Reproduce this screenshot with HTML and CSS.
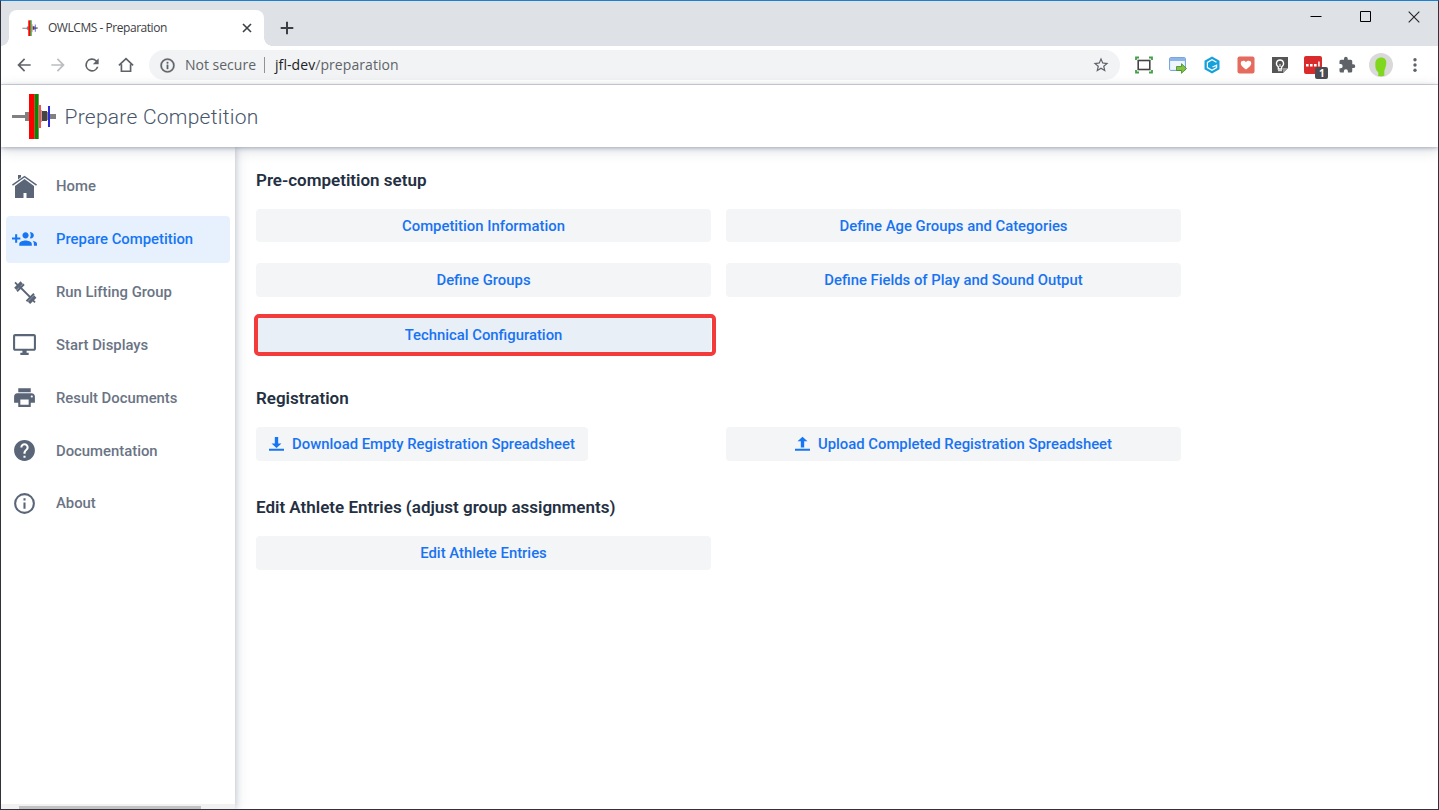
FILE: index.html
```html
<!DOCTYPE html>
<html lang="en">
<head>
<meta charset="utf-8">
<title>OWLCMS - Preparation</title>
<link rel="stylesheet" href="styles.css">
</head>
<body>
<svg width="0" height="0" class="defs" aria-hidden="true">
  <symbol id="logo" viewBox="0 0 46 46">
    <path fill="#808080" d="M1 22h14v3H1zM14 19h5v9h-5zM31 21h14v5H31z"/>
    <path fill="#8b8b6a" d="M23 1h1v45h-1zM27 1h1v45h-1z"/><path fill="#f00" d="M18 1h5.400v45H18z"/>
    <path fill="#008a00" d="M24 1h3v45h-3z"/><path fill="#ef5350" d="M28 12h2v23h-2z"/>
    <path fill="#aaa" d="M30 17h1v12h-1z"/><path fill="#444" d="M31 18h5v10h-5z"/><path fill="#888" d="M36 19h1v8h-1z"/>
    <path fill="#2a2ad8" d="M37 13h2v21h-2z"/>
  </symbol>
</svg>
<div class="window">
  <div class="tabstrip">
    <div class="tab">
      <svg class="favicon" viewBox="0 0 46 46"><use href="#logo"/></svg>
      <span class="tab-title">OWLCMS - Preparation</span>
      <svg class="tab-close" viewBox="0 0 10 10"><path d="M1 1l8 8M9 1l-8 8" stroke="#3c4043" stroke-width="1.6"/></svg>
    </div>
    <svg class="new-tab" viewBox="0 0 14 14"><path d="M7 .7v12.6M.7 7h12.6" stroke="#3c4043" stroke-width="2"/></svg>
    <div class="controls">
      <svg viewBox="0 0 12 12"><path d="M.5 5.5h11" stroke="#000"/></svg>
      <svg viewBox="0 0 12 12"><path d="M1.500 .5h10v10h-10z" fill="none" stroke="#000"/></svg>
      <svg viewBox="0 0 12 12"><path d="M.7 .7l10.6 10.6M11.3 .7L.7 11.3" stroke="#222" stroke-width="1.1"/></svg>
    </div>
  </div>

  <div class="toolbar">
    <div class="nav-buttons">
      <svg viewBox="0 0 24 24" fill="#5f6368"><path d="M20 11H7.83l5.59-5.59L12 4l-8 8 8 8 1.41-1.41L7.83 13H20v-2z"/></svg>
      <svg viewBox="0 0 24 24" fill="#bbbdc0"><path d="M12 4l-1.41 1.41L16.17 11H4v2h12.17l-5.58 5.59L12 20l8-8z"/></svg>
      <svg viewBox="0 0 24 24" fill="#5f6368"><path d="M17.65 6.35A8 8 0 1 0 19.73 14h-2.08A6 6 0 1 1 12 6c1.66 0 3.14.69 4.22 1.78L13 11h7V4z"/></svg>
      <svg viewBox="0 0 24 24" fill="none" stroke="#5f6368" stroke-width="2"><path d="M3.500 12.500L12 4.300l8.500 8.200M6.500 11v8.500h11V11"/></svg>
    </div>
    <div class="omnibox">
      <svg class="info" viewBox="0 0 24 24" fill="#5f6368"><path d="M11 7h2v2h-2zm0 4h2v6h-2zm1-9a10 10 0 1 0 0 20 10 10 0 0 0 0-20zm0 18a8 8 0 1 1 0-16 8 8 0 0 1 0 16z" stroke="#5f6368" stroke-width=".5"/></svg>
      <span class="secure">Not secure</span>
      <span class="divider"></span>
      <span class="url"><span class="host">jfl-dev</span>/preparation</span>
      <svg class="star" viewBox="0 0 24 24" fill="#5f6368"><path d="M22 9.240l-7.190-.62L12 2 9.190 8.630 2 9.240l5.460 4.730L5.820 21 12 17.270 18.180 21l-1.630-7.030L22 9.240zM12 15.400l-3.760 2.270 1-4.280-3.320-2.880 4.380-.38L12 6.100l1.710 4.040 4.380.38-3.320 2.880 1 4.280L12 15.400z"/></svg>
    </div>
    <div class="extensions">
      <svg viewBox="0 0 18 18" fill="none"><path d="M1 4V1.500H4M14 1.500h3V4M17 14v2.500H14M4 16.500H1V14" stroke="#43a047" stroke-width="1.800"/><rect x="3.200" y="4.500" width="11.600" height="9" stroke="#444" stroke-width="1.600"/></svg>
      <svg viewBox="0 0 18 18"><rect x=".6" y="1.600" width="15.800" height="12.800" rx="1" fill="#eef5fd" stroke="#6d9ddb"/><path d="M1 2h15v3H1z" fill="#8db5ec"/><path d="M7.500 10.500h5V7.700l5 4.800-5 4.800v-2.800h-5z" fill="#83c341" stroke="#3d8a26" stroke-width=".8"/></svg>
      <svg viewBox="0 0 18 18"><path d="M9 .5l7.500 4.300v8.400L9 17.500l-7.500-4.300V4.800z" fill="#16a0dc"/><path d="M13.500 6.300L9 3.700 4.400 6.400v5.200L9 14.300l4.600-2.700V9.200L9.500 11" fill="none" stroke="#fff" stroke-width="1.200"/></svg>
      <svg viewBox="0 0 18 18"><rect x=".5" y=".5" width="17" height="17" rx="2" fill="#e46b5d"/><path d="M9 13.500C5 10.600 3.800 9 3.800 7.200 3.800 4.600 7.500 4 9 6.200c1.500-2.200 5.200-1.600 5.200 1C14.200 9 13 10.600 9 13.500z" fill="#fff"/></svg>
      <svg viewBox="0 0 18 18"><path d="M1 1h16v11l-5 5H1z" fill="#555"/><path d="M12 17l5-5h-5z" fill="#999"/><path d="M7.300 10.800C4 8.500 5.400 4 9 4s5 4.500 1.700 6.800V13H7.300z" fill="none" stroke="#fff" stroke-width="1.300"/><path d="M7 14.700h4M9 8v3" stroke="#fff"/></svg>
      <span class="badged">
        <svg viewBox="0 0 18 18"><rect x="0" y="0" width="18" height="18" rx="2" fill="#d92b2b"/><path d="M2 8h2.600v2.600H2zM6 8h2.600v2.600H6zM10 8h2.600v2.600H10zM14.200 5.500h1.500v5h-1.500z" fill="#fff"/></svg>
        <span class="badge">1</span>
      </span>
      <svg viewBox="0 0 24 24" fill="#5f6368"><path d="M20.500 11H19V7a2 2 0 0 0-2-2h-4V3.500a2.500 2.500 0 0 0-5 0V5H4a2 2 0 0 0-2 2v3.800h1.500a2.700 2.700 0 0 1 0 5.400H2V20a2 2 0 0 0 2 2h3.800v-1.500a2.700 2.700 0 0 1 5.400 0V22H17a2 2 0 0 0 2-2v-4h1.500a2.500 2.500 0 0 0 0-5z"/></svg>
      <svg class="avatar" viewBox="0 0 24 24"><circle cx="12" cy="12" r="12" fill="#d9d9d9"/><path d="M12.300 4.500c3.300 0 5 2.200 5 5.200 0 3.500-1.400 6-2 8.300v4.800c-1.500.6-5 .5-6.300 0 .6-1.300.5-2.600 0-3.700-2-1.300-2.900-4.400-2.700-8.600.1-3.800 2.500-6 6-6z" fill="#80d81e"/></svg>
      <svg viewBox="0 0 18 18" fill="#5f6368"><circle cx="9" cy="3.800" r="1.700"/><circle cx="9" cy="9" r="1.700"/><circle cx="9" cy="14.200" r="1.700"/></svg>
    </div>
  </div>

  <header class="app-header">
    <svg class="logo" viewBox="0 0 46 46"><use href="#logo"/></svg>
    <span class="app-title">Prepare Competition</span>
  </header>

  <div class="body">
    <nav class="sidebar">
      <a class="item"><svg viewBox="0 0 25 25"><path d="M6 1h3v2.300l-3 2.300zM12.500 1.700L25 10.400l-.9 1.400-11.600-8.200L.9 11.800 0 10.400z"/><path d="M3 12l9.500-7L22 12v12h-7.500v-5h-3v5H3z"/></svg>Home</a>
      <a class="item active"><svg viewBox="0 0 24 24"><path d="M8 10H5V7H3v3H0v2h3v3h2v-3h3v-2zm10 1c1.660 0 2.990-1.340 2.990-3S19.660 5 18 5c-.32 0-.63.05-.91.14.57.81.9 1.790.9 2.860s-.34 2.040-.9 2.860c.28.090.59.140.91.140zm-5 0c1.660 0 2.990-1.340 2.990-3S14.660 5 13 5s-3 1.340-3 3 1.340 3 3 3zm6.620 2.160c.83.730 1.380 1.660 1.380 2.840v2h3v-2c0-1.540-2.370-2.490-4.380-2.840zM13 13c-2 0-6 1-6 3v2h12v-2c0-2-4-3-6-3z"/></svg>Prepare Competition</a>
      <a class="item"><svg viewBox="0 0 25 25"><g fill="none" stroke="#5a6678"><path d="M7 7l12 12" stroke-width="1.800"/><path d="M5 12.200l7-7M14.500 22.300l7.500-7.500" stroke-width="2"/><path d="M3.300 9.900L9.700 3.500M17 23.800l6.300-6.300" stroke-width="3.200"/><path d="M3 3.300l3 3M20.500 20.800l2.500 2.500" stroke-width="1.800"/></g></svg>Run Lifting Group</a>
      <a class="item"><svg viewBox="0 0 24 24"><path d="M21 2H3c-1.100 0-2 .9-2 2v12c0 1.100.9 2 2 2h7v2H8v2h8v-2h-2v-2h7c1.100 0 2-.9 2-2V4c0-1.100-.9-2-2-2zm0 14H3V4h18v12z"/></svg>Start Displays</a>
      <a class="item"><svg viewBox="0 0 24 24"><path d="M19 8H5c-1.660 0-3 1.340-3 3v6h4v4h12v-4h4v-6c0-1.660-1.340-3-3-3zm-3 11H8v-5h8v5zm3-7c-.55 0-1-.45-1-1s.45-1 1-1 1 .45 1 1-.45 1-1 1zm-1-9H6v4h12V3z"/></svg>Result Documents</a>
      <a class="item"><svg viewBox="0 0 24 24"><path d="M12 2C6.480 2 2 6.480 2 12s4.480 10 10 10 10-4.480 10-10S17.520 2 12 2zm1 17h-2v-2h2v2zm2.070-7.750l-.9.920C13.450 12.900 13 13.500 13 15h-2v-.5c0-1.100.45-2.100 1.170-2.830l1.240-1.260c.37-.36.59-.86.59-1.410 0-1.100-.9-2-2-2s-2 .9-2 2H8c0-2.210 1.790-4 4-4s4 1.790 4 4c0 .88-.36 1.680-.93 2.250z"/></svg>Documentation</a>
      <a class="item"><svg viewBox="0 0 24 24"><path d="M11 17h2v-6h-2v6zm1-15a10 10 0 1 0 0 20 10 10 0 0 0 0-20zm0 18a8 8 0 1 1 0-16 8 8 0 0 1 0 16zM11 9h2V7h-2v2z"/></svg>About</a>
      <div class="scrollbar"><div class="thumb"></div></div>
    </nav>
    <main class="content">
      <h2>Pre-competition setup</h2>
      <div class="grid">
        <a class="btn">Competition Information</a>
        <a class="btn">Define Age Groups and Categories</a>
        <a class="btn">Define Groups</a>
        <a class="btn">Define Fields of Play and Sound Output</a>
        <a class="btn focus">Technical Configuration</a>
      </div>
      <h2>Registration</h2>
      <div class="grid">
        <a class="btn fit"><svg viewBox="0 0 16 16"><path d="M0 13.600h16v2H0zM6.200 1h3.600v7h3.500L8 12.800 2.700 8h3.500z"/></svg>Download Empty Registration Spreadsheet</a>
        <a class="btn"><svg viewBox="0 0 16 16"><path d="M0 13.600h16v2H0zM6.200 12.300h3.600V5.500h3.500L8 .7 2.700 5.500h3.500z"/></svg>Upload Completed Registration Spreadsheet</a>
      </div>
      <h2>Edit Athlete Entries (adjust group assignments)</h2>
      <div class="grid">
        <a class="btn">Edit Athlete Entries</a>
      </div>
    </main>
  </div>
</div>
</body>
</html>
```
FILE: styles.css
```css
* { box-sizing: border-box; }
body { margin: 0; font-family: Roboto, "Liberation Sans", sans-serif; }
svg { display: block; flex: none; }
.defs { position: absolute; }

.window {
  width: 1439px; height: 810px; overflow: hidden;
  display: flex; flex-direction: column;
  border: 1px solid #32323c; border-top-color: #1a80d2;
  background: #fff;
}

/* Browser chrome */
.tabstrip { height: 45px; flex: none; display: flex; background: #dee1e6; padding: 9px 0 0 8px; }
.tab {
  position: relative; width: 255px; height: 36px; padding: 0 13px;
  display: flex; align-items: center;
  background: #fff; border-radius: 8px 8px 0 0;
}
.tab::before, .tab::after { content: ""; position: absolute; bottom: 0; width: 8px; height: 8px; }
.tab::before { left: -8px; background: radial-gradient(circle at 0 0, transparent 7.5px, #fff 8px); }
.tab::after { right: -8px; background: radial-gradient(circle at 100% 0, transparent 7.5px, #fff 8px); }
.favicon { width: 16px; height: 16px; }
.tab-title { margin-left: 10px; padding-bottom: 1px; font: 12px "Open Sans", sans-serif; letter-spacing: -0.46px; color: #3c4043; flex: 1; white-space: nowrap; }
.tab-close { width: 10px; height: 10px; margin-right: -1px; }
.new-tab { width: 14px; height: 14px; margin: 11px 0 0 16px; }
.controls { margin: 1px 18px 0 auto; display: flex; gap: 37px; }
.controls svg { width: 12px; height: 12px; }

.toolbar { height: 39px; flex: none; display: flex; align-items: center; border-bottom: 1px solid #dadce0; padding-left: 13px; }
.nav-buttons { display: flex; gap: 14px; }
.nav-buttons svg { width: 20px; height: 20px; }
.omnibox {
  width: 971px; height: 30px; margin-left: 13px; padding: 0 10px;
  display: flex; align-items: center;
  background: #f1f3f4; border-radius: 15px;
  font: 14px "Open Sans", sans-serif; color: #5f6368;
}
.info { width: 17px; height: 17px; }
.secure { margin-left: 9px; width: 72px; padding-bottom: 1px; white-space: nowrap; }
.divider { width: 1px; height: 16px; background: #8f9296; margin: 0 10px 0 7px; }
.url { flex: 1; padding-bottom: 1px; letter-spacing: .07px; }
.host { color: #202124; }
.star { width: 18px; height: 18px; }
.extensions { display: flex; align-items: center; gap: 15.900px; margin-left: 15px; }
.extensions svg { width: 18px; height: 18px; }
.extensions .avatar { width: 24px; height: 24px; margin: 0 -3px; }
.badged { position: relative; }
.badge {
  position: absolute; left: 11px; top: 11px; width: 13px; height: 12px;
  border-radius: 2px; background: #4a4d52; color: #fff;
  font: bold 10px/12px "Open Sans", sans-serif; text-align: center;
}

/* Application */
.app-header {
  position: relative; z-index: 2; height: 62px; flex: none; padding-left: 10px;
  display: flex; align-items: center; background: #fff;
  box-shadow: 0 1px 4px rgba(40, 56, 90, .35), 0 3px 12px rgba(40, 56, 90, .18);
}
.logo { width: 46px; height: 46px; }
.app-title { margin: 2px 0 0 7.500px; font-size: 21px; font-weight: 300; letter-spacing: .25px; color: #47566a; }

.body { flex: 1; display: flex; min-height: 0; }
.sidebar {
  position: relative; z-index: 1; width: 234px; flex: none; background: #fff;
  display: flex; flex-direction: column; gap: 5.850px; padding: 15.800px 5px 0;
  box-shadow: 0 0 7px rgba(40, 56, 90, .28), 2px 0 14px rgba(40, 56, 90, .1);
}
.item {
  height: 47px; flex: none; display: flex; align-items: center; gap: 19px; padding: 0 6px;
  border-radius: 4px; font-size: 14.850px; font-weight: 500; color: #6a7484;
}
.item svg { width: 25px; height: 25px; fill: #5a6678; }
.item.active { background: #e7f1fe; color: #1676f3; }
.item.active svg { fill: #1676f3; }
.scrollbar { height: 5px; margin: auto -5px 0; padding: 2px 0 0 18px; background: #f1f1f1; }
.thumb { width: 182px; height: 3px; background: #c1c1c1; }

.content { flex: 1; padding: 16.800px 21px; }
h2 { margin: 0 0 13px; font-size: 17px; line-height: 32px; font-weight: 600; color: #243042; }
.grid { display: grid; grid-template-columns: 455px 455px; column-gap: 15px; row-gap: 21px; margin-bottom: 30.400px; }
.btn {
  position: relative; height: 33.600px; display: flex; align-items: center; justify-content: center;
  border-radius: 4px; background: #f3f5f7; color: #1873f2;
  font-size: 14.850px; font-weight: 500; white-space: nowrap;
}
.btn svg { width: 15px; height: 15px; fill: #1676f3; margin-right: 8px; }
.btn.fit { width: 332px; }
.btn.focus { background: #e8eff7; }
.btn.focus::after {
  content: ""; position: absolute; inset: -4px -5px -4.400px -2px;
  border: 4px solid #f43b3b; border-radius: 5px;
}
```
